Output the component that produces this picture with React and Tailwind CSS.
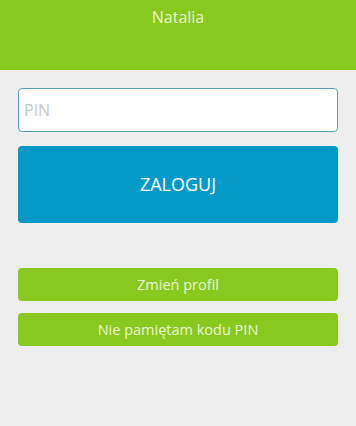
export default function App() {
  return (
    <div className="min-h-[426px] w-full bg-[#eeeeee] font-['Open_Sans',sans-serif]">
      {/* Header */}
      <div className="h-[70px] bg-[#88c920] pt-[6px] text-center">
        <p className="text-[16px] leading-[22px] text-[#e6f5c8]">Natalia</p>
      </div>

      <div className="px-[18px] pt-[18px]">
        <input
          type="password"
          placeholder="PIN"
          className="block h-[44px] w-full rounded-[4px] border border-[#5a9fb5] bg-white px-[5px] text-[16px] text-[#333] placeholder:text-[#c8c8c8] outline-none"
        />

        <button className="mt-[14px] flex h-[77px] w-full items-center justify-center rounded-[4px] bg-[#0599c7] text-[18px] text-white">
          ZALOGUJ
        </button>

        <button className="mt-[45px] flex h-[33px] w-full items-center justify-center rounded-[4px] bg-[#88c920] text-[14.5px] text-[#eaf7d2]">
          Zmień profil
        </button>
        <button className="mt-[12px] flex h-[33px] w-full items-center justify-center rounded-[4px] bg-[#88c920] text-[14.5px] text-[#eaf7d2]">
          Nie pamiętam kodu PIN
        </button>
      </div>
    </div>
  );
}
